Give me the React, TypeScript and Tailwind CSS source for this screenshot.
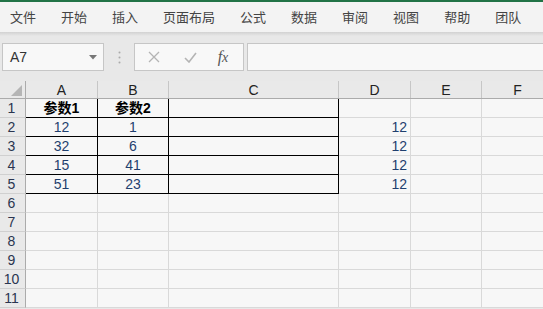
const menus = ["文件", "开始", "插入", "页面布局", "公式", "数据", "审阅", "视图", "帮助", "团队"];

const cols = [
  { key: "A", w: "w-[72px]" },
  { key: "B", w: "w-[71px]" },
  { key: "C", w: "w-[170px]" },
  { key: "D", w: "w-[72px]" },
  { key: "E", w: "w-[71px]" },
  { key: "F", w: "w-[72px]" },
];

const data: Record<number, string[]> = {
  1: ["参数1", "参数2", "", "", "", ""],
  2: ["12", "1", "", "12", "", ""],
  3: ["32", "6", "", "12", "", ""],
  4: ["15", "41", "", "12", "", ""],
  5: ["51", "23", "", "12", "", ""],
};

const font = { fontFamily: '"Liberation Sans", "Noto Sans CJK SC", sans-serif' };

function Cell({ row, ci }: { row: number; ci: number }) {
  const col = cols[ci];
  const text = data[row]?.[ci] ?? "";
  const boxed = row <= 5 && ci <= 2;
  const bold = row === 1;
  const align = ci === 3 ? "justify-end pr-[3px]" : "justify-center";
  return (
    <div
      className={`${col.w} shrink-0 h-full flex items-center ${align} border-r border-b ${
        boxed ? "border-black" : "border-[#d9d9d9]"
      } ${bold ? "font-bold text-black" : "text-[#1f3f6e]"} text-[14px]`}
    >
      {text}
    </div>
  );
}

export default function App() {
  return (
    <div className="w-[543px] h-[309px] overflow-hidden bg-[#e8e8e8]" style={font}>
      <div className="h-[2px] bg-[#217346]" />
      <div
        className="h-[30px] flex items-center gap-[25px] pl-[10px] bg-[#f3f3f3] text-[13px] text-[#444] whitespace-nowrap"
        style={{ fontFamily: '"Noto Sans CJK SC", sans-serif' }}
      >
        {menus.map((m) => (
          <span key={m}>{m}</span>
        ))}
      </div>

      <div className="h-[49px] relative">
        <div className="absolute inset-x-0 top-0 h-[4px] bg-gradient-to-b from-[#d2d2d2] to-transparent" />
        <div className="flex items-start pt-[11px] pl-[2px]">
          <div className="w-[102px] h-[28px] border border-[#c6c6c6] bg-[#f8f8f8] flex items-center pl-[7px] pr-[6px] text-[14px] text-[#333]">
            <span className="flex-1">A7</span>
            <svg width="8" height="5" viewBox="0 0 8 5">
              <path d="M0 0h8L4 4.5z" fill="#777" />
            </svg>
          </div>
          <div className="w-[30px] h-[28px] flex items-center justify-center">
            <svg width="3" height="13" viewBox="0 0 3 13">
              <circle cx="1.5" cy="1.5" r="1" fill="#aaa" />
              <circle cx="1.5" cy="6.5" r="1" fill="#aaa" />
              <circle cx="1.5" cy="11.5" r="1" fill="#aaa" />
            </svg>
          </div>
          <div className="w-[110px] h-[28px] border border-[#c6c6c6] bg-[#f8f8f8] flex items-center">
            <div className="w-[38px] flex justify-center">
              <svg width="12" height="12" viewBox="0 0 12 12">
                <path d="M1 1l10 10M11 1L1 11" stroke="#b4b4b4" strokeWidth="1.3" />
              </svg>
            </div>
            <div className="w-[34px] flex justify-center">
              <svg width="13" height="11" viewBox="0 0 13 11">
                <path d="M1 6l4 4L12 1" stroke="#b4b4b4" strokeWidth="1.6" fill="none" />
              </svg>
            </div>
            <div className="flex-1 flex justify-center pr-[4px]">
              <span
                className="italic text-[16px] text-[#555] leading-none"
                style={{ fontFamily: '"Liberation Serif", serif' }}
              >
                f<span className="text-[14px]">x</span>
              </span>
            </div>
          </div>
          <div className="ml-[3px] flex-1 h-[28px] border-y border-l border-[#c6c6c6] bg-[#f8f8f8]" />
        </div>
      </div>

      <div className="bg-[#f7f7f7]">
        <div className="flex h-[18px] bg-[#e9e9e9] border-b border-[#ababab] text-[14px] text-[#222]">
          <div className="w-[26px] shrink-0 border-r border-[#ababab] relative">
            <svg className="absolute right-[3px] bottom-[2px]" width="11" height="11" viewBox="0 0 11 11">
              <path d="M11 0v11H0z" fill="#b5b5b5" />
            </svg>
          </div>
          {cols.map((c) => (
            <div
              key={c.key}
              className={`${c.w} shrink-0 border-r border-[#c6c6c6] flex items-center justify-center leading-none`}
            >
              {c.key}
            </div>
          ))}
        </div>
        {Array.from({ length: 11 }, (_, i) => i + 1).map((r) => (
          <div key={r} className="flex h-[19px]">
            <div className="w-[26px] shrink-0 bg-[#e9e9e9] border-r border-b border-[#ababab] border-b-[#d0d0d0] flex items-center justify-center pr-[2px] text-[14px] text-[#2a3550]">
              {r}
            </div>
            {cols.map((c, ci) => (
              <Cell key={c.key} row={r} ci={ci} />
            ))}
          </div>
        ))}
      </div>
    </div>
  );
}
